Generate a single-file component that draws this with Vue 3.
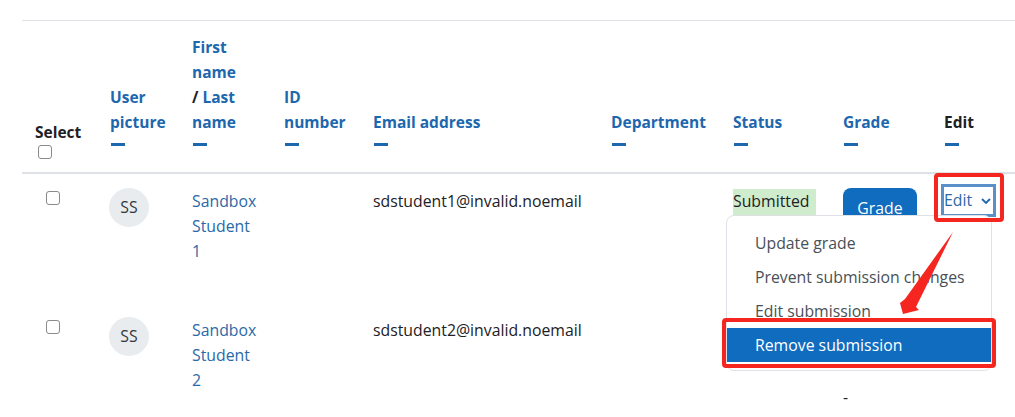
<template>
  <div class="page">
    <table class="grading">
      <colgroup>
        <col v-for="w in colWidths" :key="w.id" :style="{ width: w.px + 'px' }" />
      </colgroup>
      <thead>
        <tr>
          <th class="select-head">
            <div class="plain">Select</div>
            <input class="box head-box" type="checkbox" />
          </th>
          <th v-for="col in sortCols" :key="col.label" :class="{ plain: col.plain }">
            <template v-if="col.label === 'First'">
              <a class="first-name">First name</a>
              <span class="plain">/</span> <a>Last name</a>
            </template>
            <a v-else :class="{ plain: col.plain }">{{ col.label }}</a>
            <span class="dash"></span>
          </th>
        </tr>
      </thead>
      <tbody>
        <tr v-for="s in students" :key="s.email">
          <td class="check-cell"><input class="box" type="checkbox" /></td>
          <td><span class="avatar">SS</span></td>
          <td><a class="name">{{ s.name }}</a></td>
          <td></td>
          <td>{{ s.email }}</td>
          <td></td>
          <td><span class="status">Submitted for grading</span></td>
          <td>
            <button class="grade-btn">Grade</button>
            <div class="no-grade">-</div>
          </td>
          <td>
            <div v-if="s.open" class="edit-select">Edit
              <svg width="10" height="6" viewBox="0 0 10 6"><path d="M1 1l4 4 4-4" fill="none" stroke="#1d67ae" stroke-width="1.8" /></svg>
            </div>
          </td>
        </tr>
      </tbody>
    </table>

    <ul class="menu">
      <li v-for="item in menuItems" :key="item" :class="{ active: item === 'Remove submission' }">{{ item }}</li>
    </ul>

    <div class="mark mark-edit"></div>
    <div class="mark mark-remove"></div>
    <svg class="arrow" width="60" height="90" viewBox="0 0 60 90">
      <path d="M55 2 L18 77 L21 80 L5 84 L2 73 L7 69 Z" fill="#f5251f" />
    </svg>
  </div>
</template>

<script setup>
const colWidths = [
  { id: 'select', px: 76 },
  { id: 'pic', px: 82 },
  { id: 'name', px: 92 },
  { id: 'idnum', px: 89 },
  { id: 'email', px: 238 },
  { id: 'dept', px: 122 },
  { id: 'status', px: 110 },
  { id: 'grade', px: 101 },
  { id: 'edit', px: 83 },
]

const sortCols = [
  { label: 'User picture' },
  { label: 'First' },
  { label: 'ID number' },
  { label: 'Email address' },
  { label: 'Department' },
  { label: 'Status' },
  { label: 'Grade' },
  { label: 'Edit', plain: true },
]

const students = [
  { name: 'Sandbox Student 1', email: 'sdstudent1@invalid.noemail', open: true },
  { name: 'Sandbox Student 2', email: 'sdstudent2@invalid.noemail', open: false },
]

const menuItems = ['Update grade', 'Prevent submission changes', 'Edit submission', 'Remove submission']
</script>

<style scoped>
.page {
  position: relative;
  width: 1015px;
  height: 417px;
  overflow: hidden;
  background: #fff;
  padding: 20px 0 0 22px;
  box-sizing: border-box;
  font-family: "Open Sans", "Noto Sans", sans-serif;
  font-size: 15.8px;
  line-height: 25px;
  color: #1d2125;
}

.grading {
  table-layout: fixed;
  width: 993px;
  border-collapse: collapse;
  border-top: 1px solid #dee2e6;
}

th {
  text-align: left;
  vertical-align: bottom;
  padding: 14px 12px 26px;
  border-bottom: 2px solid #dee2e6;
  font-size: 15.5px;
  font-weight: 700;
  color: #1d67ae;
}

th.plain,
.plain {
  color: #1d2125;
}

.first-name {
  display: block;
}

.select-head {
  padding-left: 13px;
  padding-bottom: 13px;
}

.dash {
  display: block;
  width: 14px;
  height: 3px;
  margin: 8px 0 0 1px;
  background: #1d67ae;
}

td {
  vertical-align: top;
  padding: 15px 12px 0;
  height: 114px;
  box-sizing: content-box;
}

.check-cell {
  padding-left: 24px;
}

.box {
  display: block;
  appearance: none;
  box-sizing: border-box;
  width: 14px;
  height: 14px;
  margin: 2px 0 0;
  border: 1px solid #8a8a8a;
  border-radius: 3px;
  background: #fff;
}

.head-box {
  margin: 0 0 0 3px;
}

.avatar {
  display: flex;
  align-items: center;
  justify-content: center;
  width: 40px;
  height: 39px;
  margin: -1px 0 0 -1px;
  border-radius: 50%;
  background: #e9ecef;
  color: #343a40;
}

.name {
  color: #2a69a8;
}

.status {
  display: block;
  width: 83px;
  background: #cfeccd;
  color: #1d2125;
}

.grade-btn {
  display: block;
  width: 74px;
  height: 40px;
  margin-top: -1px;
  border: 0;
  border-radius: 8px;
  padding: 0;
  background: #0f6cbf;
  color: #fff;
  font: inherit;
}

.no-grade {
  margin-top: 28px;
}

.edit-select {
  display: flex;
  align-items: center;
  justify-content: space-between;
  width: 55px;
  height: 33px;
  margin: -5px 0 0 -3px;
  box-sizing: border-box;
  padding: 0 2px 0 0;
  border: 3px solid #5a8fc7;
  color: #2a69a8;
}

.menu {
  position: absolute;
  left: 726px;
  top: 215px;
  width: 266px;
  height: 156px;
  box-sizing: border-box;
  margin: 0;
  padding: 10px 0 0;
  list-style: none;
  background: #fff;
  border: 1px solid #dee2e6;
  border-radius: 8px;
  color: #495057;
}

.menu li {
  height: 34px;
  line-height: 34px;
  padding-left: 28px;
  white-space: nowrap;
}

.menu li.active {
  background: #0f6cbf;
  color: #fff;
}

.mark {
  position: absolute;
  box-sizing: border-box;
  border: 4px solid #f5251f;
  border-radius: 4px;
}

.mark-edit {
  left: 934px;
  top: 173px;
  width: 70px;
  height: 49px;
}

.mark-remove {
  left: 722px;
  top: 318px;
  width: 274px;
  height: 50px;
}

.arrow {
  position: absolute;
  left: 898px;
  top: 230px;
}
</style>

<style>
html,
body {
  margin: 0;
  overflow: hidden;
}
</style>
